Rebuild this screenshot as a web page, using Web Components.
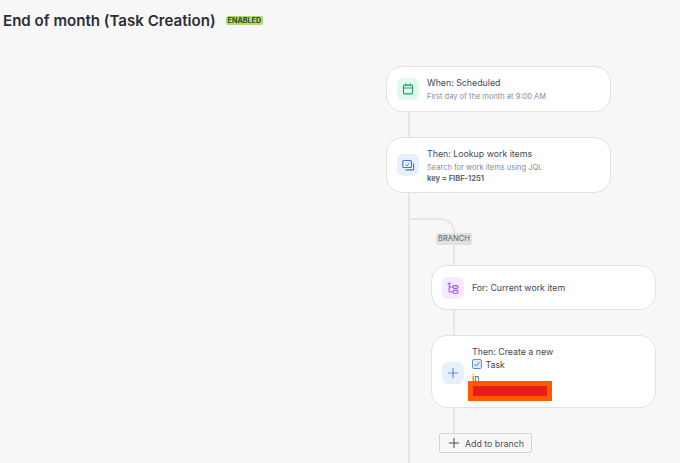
<!DOCTYPE html>
<html><head><meta charset="utf-8"><style>
html,body{margin:0;padding:0;height:463px;overflow:hidden;background:#f7f7f7}
body{font-family:Inter,"Noto Sans",sans-serif;color:#2c2f36}
</style></head><body>
<rule-page></rule-page>
<script>
const def=(n,css,html)=>customElements.define(n,class extends HTMLElement{constructor(){super();const s=this.attachShadow({mode:'open'});s.innerHTML=`<style>${css}</style>${typeof html==='function'?html(this):html}`;}});
def('flow-card',`:host{display:flex;box-sizing:border-box;width:225px;background:#fff;border:1.5px solid #e2e2e2;border-radius:16px;align-items:center;padding:0 10px;gap:8px}
.ic{width:22px;height:22px;border-radius:6px;flex:none;display:flex;align-items:center;justify-content:center;background:var(--tile)}
.t{flex:1;min-width:0;font-size:8.8px;line-height:13px;color:#454852}
svg{display:block}`,`<div class="ic"><slot name="icon"></slot></div><div class="t"><slot></slot></div>`);
def('flow-line',`:host{display:block;width:2px;background:#e6e6e6;height:25px;margin-left:var(--ml,22px)}`,``);
def('branch-tag',`:host{position:absolute;left:26px;top:40px;background:#e1e1e1;border-radius:2px;font-size:7.6px;line-height:12px;padding:0 2px;color:#5f646d}`,`<slot></slot>`);
def('add-button',`:host{display:inline-flex;align-items:center;box-sizing:border-box;height:20px;width:93px;margin-left:8px;padding-left:9px;gap:6px;border:1px solid #d4d4d4;border-radius:2px;background:#f7f7f7;font-size:8.8px;color:#50535b}`,`<svg width="10" height="10" viewBox="0 0 10 10"><path d="M5 0v10M0 5h10" stroke="#44474f" stroke-width="1"/></svg><slot></slot>`);
def('redact-box',`:host{display:block;box-sizing:border-box;width:84px;height:20px;margin:-3px 0 0 -4px;background:#e81c1c;border:5px solid #ff5a00}`,``);
def('rule-page',`:host{display:block}
h1{margin:0;padding:12px 0 0 3px;display:flex;align-items:center;gap:10px;font-size:15.1px;line-height:18px;font-weight:600;color:#2b2e36;height:18px}
.tag{background:#a9dc6a;border-radius:2px;font-size:7.2px;line-height:9px;padding:0 2px;font-weight:700;color:#37472a;margin-top:-1px}
.flow{margin:36px 0 0 386px;display:flex;flex-direction:column;align-items:flex-start}
.trunk{margin-left:22px;border-left:2px solid #e6e6e6;width:247px;height:275px;box-sizing:border-box;padding-top:25px;position:relative}
.curve{box-sizing:border-box;width:45px;height:47px;border-top:2px solid #e6e6e6;border-right:2px solid #e6e6e6;border-top-right-radius:14px}
.lane{margin-left:21px;display:flex;flex-direction:column;align-items:flex-start}
.c1{height:46px}.c2{height:56px}.c3{height:45px}.c4{height:73px;padding-top:2px}
.sub{color:#868b96;font-size:7.5px;line-height:11px;margin-top:2px}
.key{font-weight:700;color:#646975;font-size:7.5px;line-height:11px}
.task{display:flex;align-items:center;gap:3.5px}
`,`<h1>End of month (Task Creation)<span class="tag">ENABLED</span></h1>
<div class="flow">
<flow-card class="c1" style="--tile:#dffbf0"><svg slot="icon" width="12" height="12" viewBox="0 0 12 12" fill="none" stroke="#2f9e6c" stroke-width="1.2"><rect x="1.5" y="2.2" width="9" height="8.6" rx=".8"/><path d="M1.5 5h9M4 .6v2.4M8 .6v2.4"/></svg>When: Scheduled<div class="sub">First day of the month at 9:00 AM</div></flow-card>
<flow-line></flow-line>
<flow-card class="c2" style="--tile:#e8f0fe"><svg slot="icon" width="13" height="13" viewBox="0 0 13 13" fill="none" stroke="#3b74e0" stroke-width="1.1"><rect x=".8" y="1.5" width="8.7" height="7" rx="1"/><path d="M3.5 5.6 5 7l2.2-3" stroke-width=".8"/><path d="M11.6 4.5v5.4a1 1 0 0 1-1 1H3.5"/></svg>Then: Lookup work items<div class="sub">Search for work items using JQL</div><div class="key">key = FIBF-1251</div></flow-card>
<div class="trunk"><branch-tag>BRANCH</branch-tag><div class="curve"></div>
<div class="lane">
<flow-card class="c3" style="--tile:#f6e9ff"><svg slot="icon" width="12" height="12" viewBox="0 0 12 12" fill="none" stroke="#a855e8" stroke-width="1.1"><path d="M2.2 1v9h3.8M2.2 5H6M.5 1.2h3.4"/><rect x="6" y="3.6" width="5" height="2.8" rx="1.2"/><rect x="6" y="8.4" width="5" height="2.8" rx="1.2"/></svg>For: Current work item</flow-card>
<flow-line></flow-line>
<flow-card class="c4" style="--tile:#e8f0fe"><svg slot="icon" width="12" height="12" viewBox="0 0 12 12" fill="none" stroke="#5b93ea" stroke-width="1.2"><path d="M6 1v10M1 6h10"/></svg>Then: Create a new<div class="task"><svg width="10" height="10" viewBox="0 0 10 10" fill="#dfeafc" stroke="#5b8fe6"><rect x=".5" y=".5" width="9" height="9" rx="1.5"/><path d="M2.6 5.2 4.3 7l3-3.8" fill="none" stroke="#3c6fc9" stroke-width=".9"/></svg>Task</div><div>in</div><redact-box></redact-box></flow-card>
<flow-line></flow-line>
<add-button>Add to branch</add-button>
</div></div>
</div>`);
</script></body></html>
